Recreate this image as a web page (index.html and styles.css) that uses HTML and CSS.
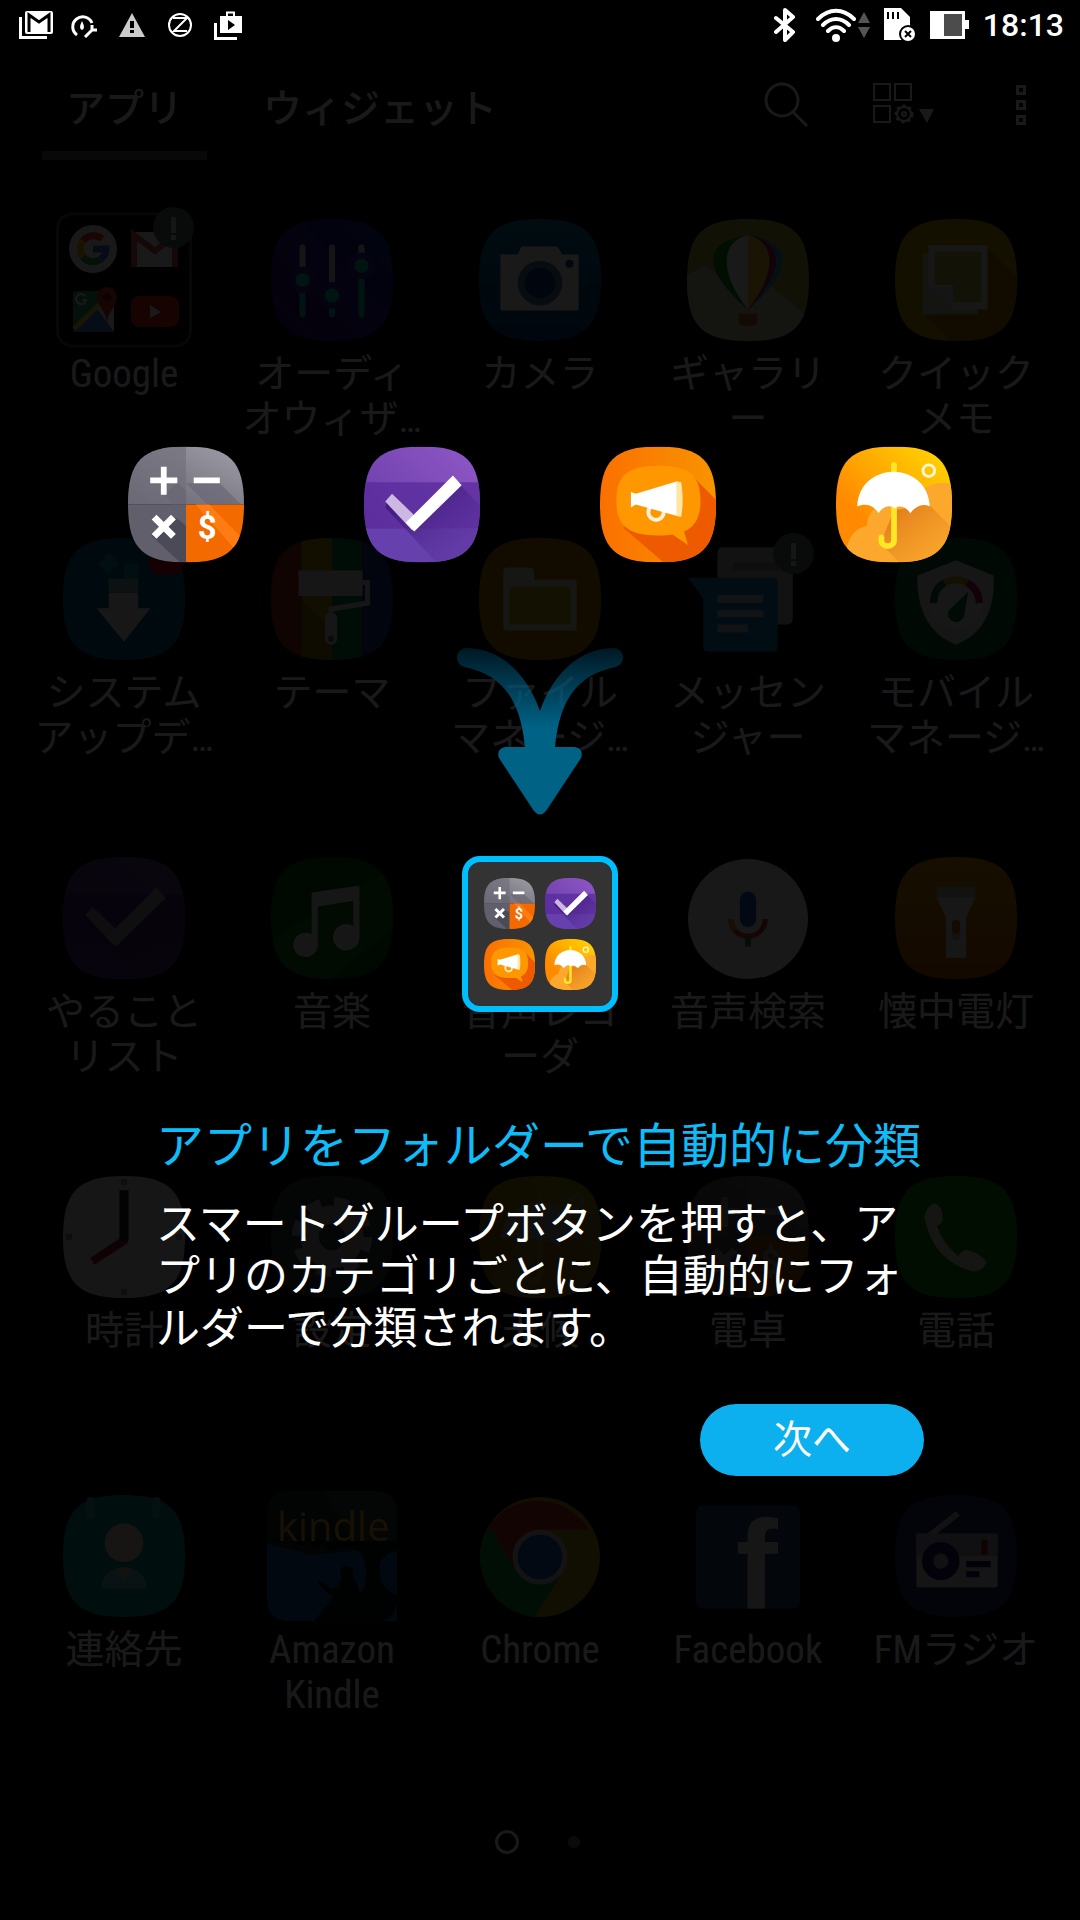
FILE: index.html
```html
<!doctype html>
<html lang="ja">

<head>
    <meta charset="utf-8">
    <meta name="viewport" content="width=device-width">
    <title>アプリ</title>
    <link rel="stylesheet" href="styles.css">
</head>

<body>
    <!-- アイコン定義 -->
    <svg class="defs" aria-hidden="true">
        <defs>
            <path id="tile" d="M60 0C105 0 120 15 120 60S105 120 60 120 0 105 0 60 15 0 60 0z" />
            <clipPath id="clip"><use href="#tile" /></clipPath>
            <linearGradient id="g-gray" x1="0" y1="1" x2="1" y2="0">
                <stop offset="0" stop-color="#64626e" /><stop offset="1" stop-color="#a09ea8" />
            </linearGradient>
            <linearGradient id="g-purple" x1="0" y1="1" x2="1" y2="0">
                <stop offset="0" stop-color="#6238a0" /><stop offset="1" stop-color="#9058c8" />
            </linearGradient>
            <linearGradient id="g-shade" x1="0" y1="0" x2="1" y2="1">
                <stop offset=".2" stop-color="#3c1878" stop-opacity=".8" /><stop offset=".8" stop-color="#5a309a" stop-opacity=".3" />
            </linearGradient>
            <linearGradient id="g-orange" x1="0" y1="0" x2="1" y2="0">
                <stop offset="0" stop-color="#fb7000" /><stop offset="1" stop-color="#f89400" />
            </linearGradient>
            <linearGradient id="g-sun" x1="0" y1="1" x2="1" y2="0">
                <stop offset=".3" stop-color="#ff8a00" /><stop offset=".9" stop-color="#ffd000" />
            </linearGradient>
            <linearGradient id="g-wet" x1="0" y1="0" x2="1" y2="1">
                <stop offset=".2" stop-color="#e07818" stop-opacity=".8" /><stop offset=".8" stop-color="#f09a28" stop-opacity=".4" />
            </linearGradient>
            <linearGradient id="g-arrow" x1="0" y1="0" x2="0" y2="1">
                <stop offset="0" stop-color="#00618a" stop-opacity=".25" />
                <stop offset=".8" stop-color="#006285" />
            </linearGradient>
            <linearGradient id="g-audio" x1="0" y1="1" x2="1" y2="0">
                <stop offset="0" stop-color="#300860" /><stop offset="1" stop-color="#081c80" />
            </linearGradient>
            <linearGradient id="g-camera" x1="0" y1="0" x2="0" y2="1">
                <stop offset="0" stop-color="#086080" /><stop offset="1" stop-color="#043068" />
            </linearGradient>
            <linearGradient id="g-torch" x1="0" y1="0" x2="0" y2="1">
                <stop offset="0" stop-color="#b07800" /><stop offset="1" stop-color="#a04800" />
            </linearGradient>
        </defs>

        <!-- 電卓 -->
        <symbol id="i-calc" viewBox="0 0 120 120">
            <g clip-path="url(#clip)">
                <path fill="url(#g-gray)" d="M0 0h120v60H0z" />
                <path fill="#6e6c78" fill-opacity=".6" d="M0 0h60v60H0z" />
                <path fill="#615f6c" d="M0 60h60v60H0z" />
                <path fill="#4b4a57" d="M50 74l10 8v38H54L24 92z" />
                <path fill="#666471" d="M51 37l9 9v14H47L38 50zM94 37l26 26v-3H82L60 38z" fill-opacity=".6" />
                <path fill="#f36a00" d="M60 60h60v60H60z" />
                <path fill="#ff7c14" d="M70 60h14l36 37v20z" />
                <path fill="none" stroke="#fff" stroke-width="6" d="M23 35h28M37 21v29M68 35h27" />
                <path fill="none" stroke="#fff" stroke-width="7" d="M27 73l20 20M47 73L27 93" />
                <text class="dollar" x="82" y="96">$</text>
            </g>
        </symbol>

        <!-- やることリスト -->
        <symbol id="i-check" viewBox="0 0 120 120">
            <g clip-path="url(#clip)">
                <path fill="url(#g-purple)" d="M0 0h120v120H0z" />
                <path fill="#55289a" fill-opacity=".7" d="M0 37h120v48H0z" />
                <path fill="#6640ac" d="M0 85h120v35H0z" />
                <path fill="url(#g-shade)" d="M100 40l20 21v59H75L22 63l2-7 28 31z" />
                <path fill="#cdb8e4" d="M22 57l7-8 22 21-1 17z" />
                <path fill="#fff" d="M92 30l9 10-49 48-9-9z" />
            </g>
        </symbol>

        <!-- メガホン -->
        <symbol id="i-mega" viewBox="0 0 120 120">
            <g clip-path="url(#clip)">
                <path fill="url(#g-orange)" d="M0 0h120v120H0z" />
                <path fill="#ee5a00" d="M98 33l22 22v65H66L24 84z" />
                <path fill="#ff9800" d="M60 20c32 0 44 10 44 36 0 16-5 27-17 32l4 14-16-11c-4 1-9 1-15 1-32 0-43-11-43-36s11-36 43-36z" />
                <circle cx="58" cy="68" r="8" fill="none" stroke="#fff2d8" stroke-width="4" />
                <path fill="#fff" d="M32 47l5 2 43-13v36L37 60l-5 3z" />
                <path fill="#ffe6a4" d="M79 36l5 1c2 12 2 24 0 36l-5-1z" />
            </g>
        </symbol>

        <!-- 天候 -->
        <symbol id="i-rain" viewBox="0 0 120 120">
            <g clip-path="url(#clip)">
                <path fill="url(#g-sun)" d="M0 0h120v120H0z" />
                <path fill="#fba82c" d="M10 120c0-24 8-35 22-38 0-24 34-34 50-20 4-20 20-28 38-23v81z" />
                <path fill="url(#g-wet)" d="M96 60l24 24v36H66L46 100l14-34z" />
                <path fill="none" stroke="#ffe628" stroke-width="6" stroke-linecap="round" d="M60 19v78c0 8-13 8-13 0v-3" />
                <path fill="#fff" d="M22 62c2-48 73-48 75 0-8-4-15 0-20 7-6-8-12-8-16-5-5-4-12-3-17 5-5-8-13-11-22-7z" />
                <circle cx="96" cy="25" r="6" fill="none" stroke="#fff4d4" stroke-width="3" />
            </g>
        </symbol>

        <symbol id="i-alert" viewBox="0 0 41 41">
            <circle cx="20.500" cy="20.500" r="20.500" fill="#4c5654" />
            <path fill="#a8b0ae" d="M18 10h5v16h-5zM18 28h5v5h-5z" />
        </symbol>
    </svg>

    <!-- ステータスバー -->
    <header class="status">
        <div class="status-left">
            <svg width="34" height="28" viewBox="0 0 34 28">
                <path fill="none" stroke="#fff" stroke-width="3" d="M1.500 6v20.500H28" />
                <rect x="6" width="28" height="23" rx="2" fill="#fff" />
                <path fill="none" stroke="#000" stroke-width="3" d="M10 21V4l10 7 10-7v17" />
            </svg>
            <svg width="28" height="26" viewBox="0 0 28 26">
                <path fill="none" stroke="#fff" stroke-width="3" d="M7 23A10 10 0 1 1 22 11" />
                <path fill="#fff" d="M12 9q4 8 0 9-4-1 0-9z" />
                <path fill="none" stroke="#fff" stroke-width="3" d="M15 25l7-7M22 13v5h5" />
            </svg>
            <svg width="26" height="24" viewBox="0 0 26 24">
                <path fill="#ccc" d="M13 0l13 24H0z" />
                <path fill="#000" d="M11 8h4v7h-4zM11 17h4v3h-4z" />
            </svg>
            <svg width="24" height="24" viewBox="0 0 24 24">
                <path fill="none" stroke="#fff" stroke-width="2" d="M5 5h14L6 18h13" />
                <circle cx="12" cy="12" r="11" fill="none" stroke="#fff" stroke-width="2" />
            </svg>
            <svg width="28" height="29" viewBox="0 0 28 29">
                <path fill="none" stroke="#fff" stroke-width="3" d="M1.500 12v15.500H23" />
                <path fill="#fff" d="M6 5h22v17H6z" />
                <path fill="none" stroke="#fff" stroke-width="2" d="M13 5V1.500h7V5" />
                <path fill="#000" d="M14 9l7 5-7 5z" />
            </svg>
        </div>
        <div class="status-right">
            <svg width="22" height="36" viewBox="0 0 22 36">
                <path fill="none" stroke="#fff" stroke-width="4" stroke-linejoin="round" stroke-linecap="round" d="M2 11l17 14-8 8V3l8 7L2 25" />
            </svg>
            <svg class="wifi" width="54" height="34" viewBox="0 0 54 34">
                <circle cx="20" cy="30" r="4" fill="#fff" />
                <path fill="none" stroke="#fff" stroke-width="4" stroke-linecap="round" d="M2 11C13 0 27 0 38 11M7 17c8-8 18-8 26 0M12 23c5-5 11-5 16 0" />
                <path fill="#555" d="M48 4l6 11H42zM42 19h12l-6 11z" />
            </svg>
            <svg width="32" height="34" viewBox="0 0 32 34">
                <path fill="#fff" d="M0 0h17l9 9v23H0z" />
                <path stroke="#000" stroke-width="2" d="M4 4v7M9 4v7M14 4v7" />
                <circle cx="24" cy="26" r="8" fill="#fff" stroke="#000" stroke-width="2" />
                <path stroke="#000" stroke-width="2" d="M21 23l6 6M27 23l-6 6" />
            </svg>
            <svg width="39" height="28" viewBox="0 0 39 28">
                <path fill="#fff" d="M0 0h35v9h4v9h-4v10H0z" />
                <path fill="#4c4c4c" d="M14 3h18v22H14z" />
            </svg>
            <time class="clock">18:13</time>
        </div>
    </header>

    <!-- ランチャー -->
    <main class="launcher">
        <nav class="tabs">
            <button class="tab active">アプリ</button>
            <button class="tab">ウィジェット</button>
            <div class="tools">
                <button class="tool" aria-label="検索">
                    <svg width="44" height="46" viewBox="0 0 44 46" fill="none" stroke="#fff" stroke-width="3">
                        <circle cx="18" cy="18" r="16" /><path d="M29 30l14 14" />
                    </svg>
                </button>
                <button class="tool" aria-label="グループ">
                    <svg width="62" height="44" viewBox="0 0 62 44" fill="none" stroke="#fff" stroke-width="2">
                        <path d="M1 1h16v16H1zM22 1h16v16H22zM1 23h16v16H1z" />
                        <circle cx="31" cy="31" r="7" stroke-width="2" /><circle cx="31" cy="31" r="8" stroke-width="3" stroke-dasharray="3 3" /><circle cx="31" cy="31" r="2" />
                        <path fill="#fff" stroke="none" d="M46 26h15l-7 14z" />
                    </svg>
                </button>
                <button class="tool" aria-label="メニュー">
                    <svg width="10" height="41" viewBox="0 0 10 41" fill="none" stroke="#fff" stroke-width="3">
                        <path d="M1.500 1.500h7v7h-7zM1.500 16.500h7v7h-7zM1.500 31.500h7v7h-7z" />
                    </svg>
                </button>
            </div>
        </nav>

        <div class="grid">
            <button class="app">
                <span class="icon">
                    <svg class="folder" viewBox="0 0 136 136">
                        <rect x="1.500" y="2" width="133" height="132" rx="15" fill="none" stroke="#3c3c3c" stroke-width="3" />
                        <circle cx="37" cy="37" r="24" fill="#d0d0d0" />
                        <g fill="none" stroke-width="7">
                            <path stroke="#c83020" d="M27 29a13 13 0 0 1 19-2" />
                            <path stroke="#d09810" d="M27 29a13 13 0 0 0 0 16" />
                            <path stroke="#208040" d="M27 45a13 13 0 0 0 18 2" />
                            <path stroke="#2858b8" d="M45 47q5-4 5-10H37" />
                        </g>
                        <path fill="#ccc" d="M75 20h47v35H75z" />
                        <path fill="none" stroke="#b04030" stroke-width="6" d="M78 55V23l21 16 20-16v32" />
                        <rect x="17" y="79" width="41" height="41" rx="3" fill="#208050" />
                        <path fill="#3868b0" d="M17 120l24-24 17 24z" />
                        <path fill="#ccc" d="M41 96l17-15v39z" />
                        <path stroke="#d0b030" stroke-width="5" d="M18 117l28-27" />
                        <path fill="#a83020" d="M51 110c-2-12-10-16-10-25a10 10 0 0 1 20 0c0 9-8 13-10 25z" />
                        <circle cx="51" cy="85" r="4" fill="#601010" />
                        <path fill="none" stroke="#ddd" stroke-width="2" d="M29 84a5 5 0 1 0 1 4h-4" />
                        <rect x="75" y="84" width="48" height="31" rx="8" fill="#b01810" />
                        <path fill="#ddd" d="M94 93l11 7-11 6z" />
                    </svg>
                    <svg class="badge badge-folder"><use href="#i-alert" /></svg>
                </span>
                <span class="label">Google</span>
            </button>
            <button class="app">
                <span class="icon"><svg viewBox="0 0 120 120">
                    <use href="#tile" fill="url(#g-audio)" />
                    <g stroke-width="6" stroke-linecap="round">
                        <path stroke="#aaa" d="M31 28v22M60 28v40M89 28v8" />
                        <path stroke="#00a890" d="M31 70v24M60 86v8M89 56v38" />
                    </g>
                    <g fill="#00a890" stroke="#241878" stroke-width="6">
                        <circle cx="31" cy="60" r="10" /><circle cx="60" cy="75" r="10" /><circle cx="89" cy="46" r="10" />
                    </g>
                </svg></span>
                <span class="label">オーディ<br>オウィザ…</span>
            </button>
            <button class="app">
                <span class="icon"><svg viewBox="0 0 120 120">
                    <use href="#tile" fill="url(#g-camera)" />
                    <path fill="#c8ccd0" d="M21 35h17l4-8h35l5 8h16v53q0 2-2 2H23q-2 0-2-2z" />
                    <circle cx="60" cy="63" r="22" fill="#386488" /><circle cx="60" cy="63" r="15" fill="#083070" />
                    <circle cx="89" cy="44" r="4" fill="#0a3c68" />
                </svg></span>
                <span class="label">カメラ</span>
            </button>
            <button class="app">
                <span class="icon"><svg viewBox="0 0 120 120">
                    <g clip-path="url(#clip)">
                        <path fill="#8a8a34" d="M0 0h120v120H0z" />
                        <path fill="#a4a880" d="M0 55l18-10 18 14 40 2 44 36v23H0z" />
                    </g>
                    <path fill="#087010" d="M60 16C15 22 14 50 60 89z" />
                    <path fill="#ccc" d="M60 16C32 22 32 54 60 89z" />
                    <path fill="#2080a0" d="M60 16c45 6 46 34 0 73z" />
                    <path fill="#a01048" d="M60 16c37 6 36 36 0 73z" />
                    <path fill="#c8a020" d="M60 16c28 6 28 38 0 73z" />
                    <path fill="#9a5420" d="M51 93h18v7q0 5-5 5h-8q-5 0-5-5z" />
                </svg></span>
                <span class="label">ギャラリ<br>ー</span>
            </button>
            <button class="app">
                <span class="icon"><svg viewBox="0 0 120 120">
                    <g clip-path="url(#clip)">
                        <path fill="#a08400" d="M0 0h120v120H0z" />
                        <path fill="#905c00" d="M91 28l29 29v63H55L28 93z" />
                    </g>
                    <path fill="#a4a48c" d="M27 34h50l4 60H27z" />
                    <path fill="#bbb" d="M33 26h58v63H57L33 66z" />
                    <path fill="#909430" d="M39 32h46v50H57V65H39z" />
                    <path fill="#aaa" d="M33 66h24v23z" />
                </svg></span>
                <span class="label">クイック<br>メモ</span>
            </button>

            <button class="app">
                <span class="icon"><svg viewBox="0 0 120 120">
                    <use href="#tile" fill="#045474" />
                    <path fill="#087c80" d="M45 14l10 11-10 10-10-10zM60 25h14v15H60z" />
                    <path fill="#708890" d="M45 40h29v14H45z" />
                    <path fill="#b8b8b8" d="M45 54h29v15h12l-26 33-27-33h12z" />
                </svg>
                <svg class="badge" viewBox="0 0 41 41"><circle cx="17" cy="24" r="20" fill="#a80808" /></svg></span>
                <span class="label">システム<br>アップデ…</span>
            </button>
            <button class="app">
                <span class="icon"><svg viewBox="0 0 120 120">
                    <g clip-path="url(#clip)">
                        <path fill="#802010" d="M0 0h30v120H0z" /><path fill="#907000" d="M30 0h30v120H30z" />
                        <path fill="#066c38" d="M60 0h30v120H60z" /><path fill="#182870" d="M90 0h30v120H90z" />
                        <path fill="#000" fill-opacity=".2" d="M30 60l30 30v30H30z" />
                    </g>
                    <path fill="#b4b4b4" d="M27 32h63v25H27z" />
                    <path fill="none" stroke="#b4b4b4" stroke-width="5" d="M90 44h5v20l-36 6v6" />
                    <rect x="53" y="73" width="12" height="32" rx="6" fill="#b4b4b4" /><circle cx="59" cy="99" r="3" fill="#555" />
                </svg></span>
                <span class="label">テーマ</span>
            </button>
            <button class="app">
                <span class="icon"><svg viewBox="0 0 120 120">
                    <use href="#tile" fill="#906400" />
                    <path fill="#b4b4a8" d="M24 34q0-5 5-5h20q5 0 5 5v7h42v50H28q-4 0-4-4z" />
                    <path fill="#908a10" d="M30 48h60v37H30z" />
                </svg></span>
                <span class="label">ファイル<br>マネージ…</span>
            </button>
            <button class="app">
                <span class="icon"><svg viewBox="0 0 120 120">
                    <rect x="30" y="9" width="74" height="76" rx="5" fill="#909090" />
                    <path fill="#707070" d="M45 24h45v8H45z" />
                    <path fill="#086c98" d="M1 39h83q5 0 5 5v63q0 5-5 5H21q-5 0-5-5V60z" />
                    <path fill="#889ca0" d="M30 56h45v8H30zM30 71h45v7H30zM30 85h30v8H30z" />
                </svg><svg class="badge"><use href="#i-alert" /></svg></span>
                <span class="label">メッセン<br>ジャー</span>
            </button>
            <button class="app">
                <span class="icon"><svg viewBox="0 0 120 120">
                    <use href="#tile" fill="#064c20" />
                    <path fill="#a8b0a8" d="M60 22l37 15c2 34-11 58-37 68-26-10-39-34-38-68z" />
                    <circle cx="60" cy="64" r="26" fill="#bbb" />
                    <g fill="none" stroke-width="7">
                        <path stroke="#0c5028" d="M38 64q0-14 11-20" /><path stroke="#a88810" d="M49 44q11-6 22 0" /><path stroke="#980848" d="M71 44q11 6 12 20" />
                    </g>
                    <path fill="#0c5830" d="M72 53l-4 23a8 8 0 1 1-15-5z" />
                </svg></span>
                <span class="label">モバイル<br>マネージ…</span>
            </button>

            <button class="app">
                <span class="icon"><svg class="faded"><use href="#i-check" /></svg></span>
                <span class="label">やること<br>リスト</span>
            </button>
            <button class="app">
                <span class="icon"><svg viewBox="0 0 120 120">
                    <g clip-path="url(#clip)">
                        <path fill="#054410" d="M0 0h120v120H0z" /><path fill="#0c6408" d="M0 80l120-70v60l-60 50H0z" fill-opacity=".6" />
                    </g>
                    <path fill="#b0b0b0" d="M40 35l47-7v51a13 13 0 1 1-6-11V43l-35 6v38a12 12 0 1 1-6-11z" />
                </svg></span>
                <span class="label">音楽</span>
            </button>
            <button class="app">
                <span class="icon"><svg viewBox="0 0 120 120">
                    <use href="#tile" fill="#802018" /><rect x="48" y="28" width="24" height="44" rx="12" fill="#ccc" />
                </svg></span>
                <span class="label">音声レコ<br>ーダ</span>
            </button>
            <button class="app">
                <span class="icon"><svg viewBox="0 0 120 120">
                    <circle cx="60" cy="61" r="59" fill="#c0c0c0" />
                    <rect x="52" y="34" width="16" height="35" rx="8" fill="#184c98" />
                    <path fill="none" stroke="#a82820" stroke-width="5" d="M43 61a17 17 0 0 0 34 0" />
                    <path fill="none" stroke="#b08810" stroke-width="5" d="M43 61q0 6 5 11" />
                    <path fill="#1a7830" d="M57 80h6v8h-6z" />
                </svg></span>
                <span class="label">音声検索</span>
            </button>
            <button class="app">
                <span class="icon"><svg viewBox="0 0 120 120">
                    <use href="#tile" fill="url(#g-torch)" />
                    <path fill="#908400" d="M42 25h36v5H42z" /><path fill="#909088" d="M41 29h38v11H41z" />
                    <path fill="#b8b8b8" d="M41 40h38l-9 19v40H50V59z" />
                    <rect x="56" y="70" width="8" height="12" rx="4" fill="#a08870" /><rect x="56" y="62" width="8" height="13" rx="4" fill="#b04010" />
                </svg></span>
                <span class="label">懐中電灯</span>
            </button>

            <button class="app">
                <span class="icon"><svg viewBox="0 0 120 120">
                    <use href="#tile" fill="#a8aeac" />
                    <path stroke="#707070" stroke-width="6" d="M60 3v6M60 111v6M3 60h6M111 60h6" />
                    <path stroke="#801020" stroke-width="8" d="M62 62L29 84" /><path stroke="#181818" stroke-width="9" d="M60 14v50" />
                </svg></span>
                <span class="label">時計</span>
            </button>
            <button class="app">
                <span class="icon"><svg viewBox="0 0 120 120">
                    <use href="#tile" fill="#243434" />
                    <circle cx="60" cy="60" r="22" fill="none" stroke="#808080" stroke-width="18" />
                    <circle cx="60" cy="60" r="34" fill="none" stroke="#808080" stroke-width="11" stroke-dasharray="14 13" />
                </svg></span>
                <span class="label">設定</span>
            </button>
            <button class="app">
                <span class="icon"><svg class="faded"><use href="#i-rain" /></svg></span>
                <span class="label">天候</span>
            </button>
            <button class="app">
                <span class="icon"><svg class="faded"><use href="#i-calc" /></svg></span>
                <span class="label">電卓</span>
            </button>
            <button class="app">
                <span class="icon"><svg viewBox="0 0 120 120">
                    <use href="#tile" fill="#0e6c04" />
                    <path fill="#a8b0a0" d="M38 27q8 0 9 15 0 5-6 7 6 17 21 30 5-7 10-6 14 4 18 12-4 9-14 9Q36 82 29 40q2-10 9-13z" />
                </svg></span>
                <span class="label">電話</span>
            </button>

            <button class="app">
                <span class="icon"><svg viewBox="0 0 120 120">
                    <use href="#tile" fill="#047468" />
                    <path stroke="#2a8888" stroke-width="8" stroke-linecap="round" d="M27 6v13M92 6v13" />
                    <circle cx="60" cy="47" r="19" fill="#b0a8a4" />
                    <path fill="#509c98" d="M38 92c0-28 44-28 44 0z" /><path fill="#a08c88" d="M52 72h16l-8 12z" />
                </svg></span>
                <span class="label">連絡先</span>
            </button>
            <button class="app">
                <span class="icon"><svg class="kindle" viewBox="0 0 130 130">
                    <rect width="130" height="130" rx="20" fill="#101818" />
                    <path fill="#104078" d="M0 52l45 12 55-6h30v72H20q-20-2-20-20z" />
                    <path fill="#20302c" d="M57 0h53q20 2 20 20v35l-44-3z" />
                    <path fill="#060a0a" d="M0 48q30-6 60 2h70v10q-12 2-17 12-3 26 17 32v6q-2 20-20 20H47l15-18 4-6-10-8-6-8q6 0 14 8l8-2q0-6 3-9-5-12 5-12 8 1 6 11 6 8 6 16 10-6 6-30-2-14-18-16l-18 4-6-8-6 6-8-9-8 6-10-8-10 4z" />
                    <text class="kindle-text" x="10" y="50">kindle</text>
                </svg></span>
                <span class="label">Amazon<br>Kindle</span>
            </button>
            <button class="app">
                <span class="icon"><svg viewBox="0 0 120 120">
                    <circle cx="60" cy="61" r="59" fill="#8c7810" />
                    <path fill="#902010" d="M10 30a59 59 0 0 1 98 4H60L36 74z" />
                    <path fill="#067028" d="M10 30l26 45 24 13 23-14-28 46A59 59 0 0 1 10 30z" />
                    <circle cx="60" cy="61" r="27" fill="#999" /><circle cx="60" cy="61" r="22" fill="#184890" />
                </svg></span>
                <span class="label">Chrome</span>
            </button>
            <button class="app">
                <span class="icon"><svg viewBox="0 0 120 120">
                    <rect x="9" y="10" width="102" height="102" rx="6" fill="#183454" />
                    <text class="fb-text" x="48" y="112">f</text>
                </svg></span>
                <span class="label">Facebook</span>
            </button>
            <button class="app">
                <span class="icon"><svg viewBox="0 0 120 120">
                    <use href="#tile" fill="#1e1852" />
                    <path stroke="#909090" stroke-width="6" d="M34 40l28-22" />
                    <rect x="21" y="38" width="80" height="53" rx="3" fill="#a8a8a8" /><path fill="#807c90" d="M21 38h80v22H21z" />
                    <circle cx="45" cy="65" r="13" fill="#888" stroke="#181050" stroke-width="11" />
                    <path fill="#900c0c" d="M85 44h6v15h-6z" /><path fill="#181050" d="M70 65h24v6H70zM70 75h13v6H70z" />
                </svg></span>
                <span class="label">FMラジオ</span>
            </button>
        </div>

        <div class="pager"><span class="page current"></span><span class="page"></span></div>
    </main>

    <!-- ガイド -->
    <section class="guide">
        <div class="samples">
            <svg><use href="#i-calc" /></svg>
            <svg><use href="#i-check" /></svg>
            <svg><use href="#i-mega" /></svg>
            <svg><use href="#i-rain" /></svg>
        </div>
        <svg class="arrow" viewBox="0 0 168 168">
            <path fill="url(#g-arrow)" d="M11 1C48 2 72 30 84 64 96 30 120 2 157 1c14 1 12 17 2 19-36 8-55 30-60 80H69C64 50 45 28 9 20-1 18-3 2 11 1z" />
            <path fill="#006285" d="M49 100h70q9 2 6 11L90 164q-6 7-12 0L43 111q-3-9 6-11z" />
        </svg>
        <div class="group">
            <svg><use href="#i-calc" /></svg>
            <svg><use href="#i-check" /></svg>
            <svg><use href="#i-mega" /></svg>
            <svg><use href="#i-rain" /></svg>
        </div>
        <div class="message">
            <h1 class="title">アプリをフォルダーで自動的に分類</h1>
            <p class="desc">スマートグループボタンを押すと、アプリのカテゴリごとに、自動的にフォルダーで分類されます。</p>
            <button class="next">次へ</button>
        </div>
    </section>
</body>

</html>
```
FILE: styles.css
```css
* {
    box-sizing: border-box;
}

body {
    position: relative;
    min-height: 100vh;
    margin: 0;
    color: #fff;
    background-color: #000;
    font-family: Roboto, "Noto Sans CJK JP", sans-serif;
}

button {
    padding: 0;
    border: 0;
    color: inherit;
    background: none;
    font: inherit;
}

svg {
    display: block;
    flex: none;
}

.defs {
    position: absolute;
    width: 0;
    height: 0;
}

/* ステータスバー */
.status {
    position: relative;
    z-index: 2;
    display: flex;
    justify-content: space-between;
    height: 50px;
    padding: 0 16px 0 12px;
}

.status-left {
    display: grid;
    grid-template-columns: repeat(5, 48px);
    place-items: center;
}

.status-right {
    display: flex;
    align-items: center;
    gap: 14px;
}

.wifi {
    margin-left: 6px;
}

.clock {
    font-size: 32px;
    font-weight: 500;
}

/* ランチャー */
.tabs {
    display: flex;
    align-items: center;
    gap: 32px;
    height: 110px;
    padding: 0 54px 0 42px;
}

.tab {
    height: 110px;
    padding: 16px 24px 0;
    border-bottom: 9px solid transparent;
    font-size: 39px;
    font-weight: 500;
    line-height: 60px;
}

.active {
    border-color: #505050;
}

.tools {
    display: flex;
    align-items: center;
    gap: 65px;
    margin-left: auto;
}

.tool:last-child {
    margin-left: 16px;
}

.grid {
    display: grid;
    grid-template-columns: repeat(5, 1fr);
    grid-auto-rows: 319px;
    padding: 52px 20px 0;
}

.app {
    display: flex;
    flex-direction: column;
    align-items: center;
    gap: 4px;
}

.icon {
    position: relative;
    display: flex;
    align-items: center;
    justify-content: center;
    width: 136px;
    height: 136px;
    filter: brightness(1.25);
}

.icon svg {
    width: 122px;
    height: 122px;
}

.icon .folder {
    width: 136px;
    height: 136px;
}

.icon .kindle {
    width: 130px;
    height: 130px;
}

.icon .faded {
    opacity: .6;
}

.icon .badge {
    position: absolute;
    top: 2px;
    right: 2px;
    width: 41px;
    height: 41px;
}

.icon .badge-folder {
    top: -5px;
    right: -2px;
}

.label {
    font-family: "Roboto Condensed", "Liberation Sans Narrow", "Noto Sans CJK JP", sans-serif;
    font-size: 39px;
    line-height: 45px;
    white-space: nowrap;
}

.pager {
    display: flex;
    align-items: center;
    justify-content: center;
    gap: 43px;
    height: 70px;
}

.page {
    width: 12px;
    height: 12px;
    margin: 0 6px;
    border-radius: 50%;
    background-color: #666;
}

.current {
    width: 24px;
    height: 24px;
    margin: 0;
    border: 3px solid #fff;
    background: none;
}

/* ガイド */
.guide {
    position: absolute;
    inset: 0;
    z-index: 1;
    display: flex;
    flex-direction: column;
    align-items: center;
    padding-top: 446px;
    background-color: rgba(0, 0, 0, .9);
}

.samples {
    display: flex;
    justify-content: space-between;
    width: 100%;
    padding: 0 128px;
}

.samples svg {
    width: 116px;
    height: 117px;
}

.arrow {
    width: 168px;
    height: 168px;
    margin-top: 84px;
}

.group {
    display: grid;
    grid-template-columns: 51px 51px;
    place-content: center;
    gap: 10px;
    width: 156px;
    height: 156px;
    margin-top: 41px;
    border: 6px solid #00bfff;
    border-radius: 18px;
    background-color: #333;
}

.group svg {
    width: 51px;
    height: 51px;
}

.message {
    display: flex;
    flex-direction: column;
    width: 100%;
    padding: 107px 156px 0;
}

.title {
    margin: 0;
    color: #0ebcf8;
    font-size: 48px;
    font-weight: 400;
    line-height: 56px;
    white-space: nowrap;
}

.desc {
    margin: 24px 0 49px;
    font-size: 44px;
    line-height: 52px;
}

.next {
    align-self: flex-end;
    width: 224px;
    height: 72px;
    border-radius: 36px;
    background-color: #0db0ee;
    font-size: 39px;
    line-height: 72px;
}

/* アイコン内の文字 */
.dollar {
    fill: #fff;
    font-size: 34px;
    font-weight: 700;
    text-anchor: middle;
}

.kindle-text {
    fill: #c08418;
    font-family: "Open Sans", sans-serif;
    font-size: 40px;
}

.fb-text {
    fill: #b4b4b4;
    font-family: "Liberation Sans", sans-serif;
    font-size: 124px;
    font-weight: 700;
}
```
